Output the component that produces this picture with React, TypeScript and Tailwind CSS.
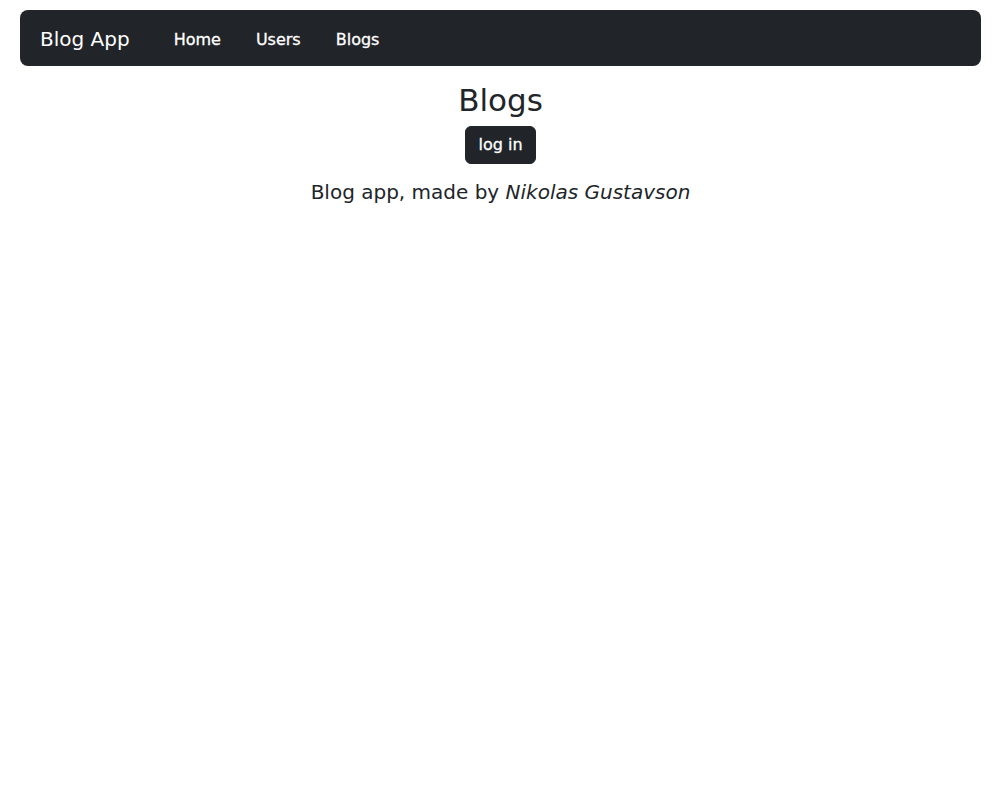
export default function App() {
  return (
    <div className="min-h-screen bg-white pt-[10px] pr-[25px] pl-5 text-[#212529] [font-family:'DejaVu_Sans',sans-serif]">
      {/* Navbar */}
      <nav className="flex h-14 items-center rounded-lg bg-[#212529] px-5">
        <span className="mr-[44px] pt-[1px] text-xl text-white">Blog App</span>
        <div className="flex items-center gap-[35px] pt-[3px] text-base text-white [-webkit-text-stroke:0.3px_white]">
          <a href="#">Home</a>
          <a href="#">Users</a>
          <a href="#">Blogs</a>
        </div>
      </nav>

      {/* Content */}
      <main className="flex flex-col items-center pt-[16px]">
        <h2 className="mb-[7px] text-[31px] leading-[1.2] font-medium">Blogs</h2>
        <button className="h-[38px] rounded-md border border-[#212529] bg-[#212529] px-[12px] text-[16px] text-white [-webkit-text-stroke:0.3px_white]">
          log in
        </button>
        <p className="mt-3 pt-[1px] text-xl leading-[1.5]">
          Blog app, made by <em>Nikolas Gustavson</em>
        </p>
      </main>
    </div>
  )
}
